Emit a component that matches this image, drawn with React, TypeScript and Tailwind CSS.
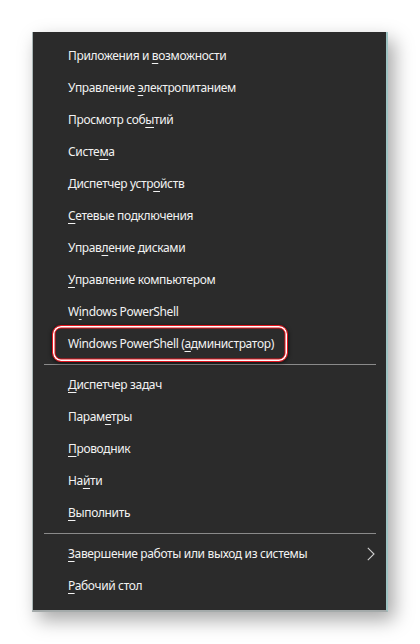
import React from 'react';

type Item = { before: string; key: string; after: string; arrow?: boolean; marked?: boolean };

const groups: Item[][] = [
  [
    { before: 'Приложения и ', key: 'в', after: 'озможности' },
    { before: 'Управление ', key: 'э', after: 'лектропитанием' },
    { before: 'Просмотр соб', key: 'ы', after: 'тий' },
    { before: 'Систе', key: 'м', after: 'а' },
    { before: 'Диспетчер устр', key: 'о', after: 'йств' },
    { before: '', key: 'С', after: 'етевые подключения' },
    { before: 'Управ', key: 'л', after: 'ение дисками' },
    { before: '', key: 'У', after: 'правление компьютером' },
    { before: 'W', key: 'i', after: 'ndows PowerShell' },
    { before: 'Windows PowerShell (', key: 'а', after: 'дминистратор)', marked: true },
  ],
  [
    { before: '', key: 'Д', after: 'испетчер задач' },
    { before: 'Парам', key: 'е', after: 'тры' },
    { before: '', key: 'П', after: 'роводник' },
    { before: 'На', key: 'й', after: 'ти' },
    { before: '', key: 'В', after: 'ыполнить' },
  ],
  [
    { before: '', key: 'З', after: 'авершение работы или выход из системы', arrow: true },
    { before: '', key: 'Р', after: 'абочий стол' },
  ],
];

const MenuRow: React.FC<{ item: Item }> = ({ item }) => (
  <div className="relative h-8 flex items-center justify-between pl-[35px] pr-[11px]">
    <span className="whitespace-nowrap tracking-[-0.35px]">
      {item.before}
      <span className="underline decoration-1 underline-offset-[3px]">{item.key}</span>
      {item.after}
    </span>
    {item.arrow && (
      <svg width="8" height="14" viewBox="0 0 8 14" className="text-[#cfcfcf]">
        <polyline points="0.8,0.8 7,7 0.8,13.2" fill="none" stroke="currentColor" strokeWidth="1.1" />
      </svg>
    )}
    {item.marked && (
      <div className="absolute left-[19px] top-[-3px] w-[236px] h-[37px] rounded-[9px] border-[1.5px] border-[#e3141d] shadow-[inset_0_0_0_1.5px_#ffffff,inset_0_0_0_2.5px_#e3141d,0_1px_4px_rgba(0,0,0,0.7)]" />
    )}
  </div>
);

const App: React.FC = () => {
  return (
    <div className="w-[420px] h-[644px] bg-white pt-[32px] pl-[32px]">
      <div
        className="w-[356px] bg-[#2b2b2b] border-l border-l-[#aab6b6] border-r-2 border-r-[#9ec3c3] border-b-2 border-b-[#a4aaaa] pt-2 pb-2 text-[12px] text-[#f2f2f2] shadow-[6px_8px_18px_rgba(0,0,0,0.35)]"
        style={{ fontFamily: '"Segoe UI", "Noto Sans", "Open Sans", sans-serif' }}
      >
        {groups.map((g, gi) => (
          <div key={gi}>
            {gi > 0 && <div className="mt-[4px] mb-[4px] ml-[11px] mr-[10px] h-px bg-[#8a8a8a]" />}
            {g.map((item, i) => (
              <MenuRow key={i} item={item} />
            ))}
          </div>
        ))}
      </div>
    </div>
  );
};

export default App;
